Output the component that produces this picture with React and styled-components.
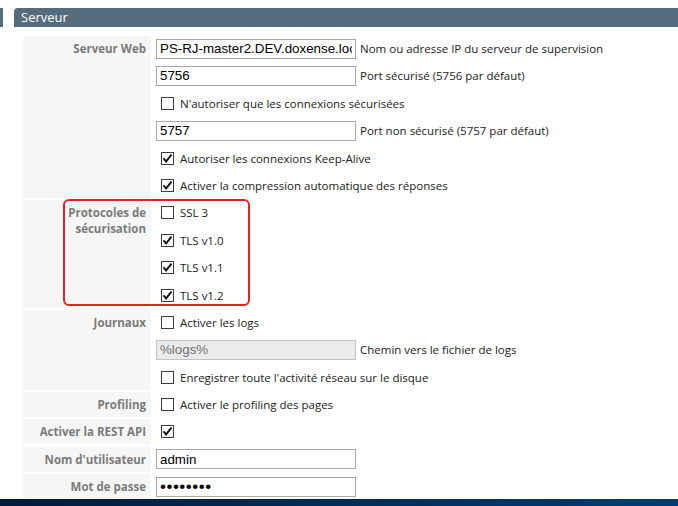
import React from 'react'
import styled, { createGlobalStyle } from 'styled-components'

const GlobalStyle = createGlobalStyle`
  html, body {
    margin: 0;
    padding: 0;
    height: 100%;
    overflow: hidden;
    background: #ffffff;
  }
  #root {
    height: 100%;
  }
`

const UI_FONT = `"Open Sans", "Noto Sans", sans-serif`

const Page = styled.div`
  display: flex;
  flex-direction: column;
  height: 100%;
  padding-top: 8px;
  box-sizing: border-box;
  font-family: ${UI_FONT};
  font-size: 11.5px;
  color: #222;
`

const HeaderRow = styled.div`
  display: flex;
  align-items: stretch;
  height: 19px;
`

const HeaderTab = styled.div`
  width: 3px;
  background: #566c7d;
`

const Header = styled.div`
  flex: 1;
  margin-left: 11px;
  padding-left: 7px;
  background: #566c7d;
  border-top-left-radius: 4px;
  color: #ffffff;
  font-size: 13px;
  line-height: 19px;
`

const Form = styled.div`
  display: flex;
  flex-direction: column;
  gap: 2.4px;
  margin: 9px 0 0 23px;
`

const Row = styled.div`
  position: relative;
  display: grid;
  grid-template-columns: 128px 1fr;
`

const Label = styled.div`
  background: #f6f6f6;
  text-align: right;
  padding: 5px 5px 0 0;
  font-weight: 700;
  line-height: 16px;
  color: #7b7b7b;
`

const Values = styled.div`
  display: flex;
  flex-direction: column;
  gap: 2.4px;
  padding-left: 5px;
`

const Line = styled.div`
  height: 25px;
  display: flex;
  align-items: center;
  gap: 4px;
  white-space: nowrap;
`

const TextInput = styled.input`
  box-sizing: border-box;
  width: 200px;
  height: 20px;
  margin: 0;
  padding: 0 3px;
  border: 1px solid ${({ disabled }) => (disabled ? '#c2c2c2' : '#a9a9a9')};
  background: ${({ disabled }) => (disabled ? '#ebebeb' : '#ffffff')};
  color: ${({ disabled }) => (disabled ? '#707070' : '#000000')};
  font-family: "Liberation Sans", Arial, sans-serif;
  font-size: ${({ type }) => (type === 'password' ? '17px' : '13.33px')};
  letter-spacing: ${({ type }) => (type === 'password' ? '0.5px' : 'normal')};
  outline: none;
`

const Hint = styled.span`
  color: #222;
`

const CheckWrap = styled.label`
  display: flex;
  align-items: center;
  gap: 6px;
  padding-left: 5px;
`

const Box = styled.svg`
  flex: none;
  display: block;
`

const Annotation = styled.div`
  position: absolute;
  left: 40px;
  top: -1px;
  width: 187px;
  height: 107px;
  box-sizing: border-box;
  border: 2px solid #e52222;
  border-radius: 6px;
  pointer-events: none;
`

const Taskbar = styled.div`
  margin-top: auto;
  height: 8px;
  background: linear-gradient(90deg, #001a38 0%, #012a55 45%, #003d72 100%);
`

function Checkbox({ checked, children }) {
  return (
    <CheckWrap>
      <Box width="13" height="13" viewBox="0 0 13 13">
        <rect x="0.5" y="0.5" width="12" height="12" fill="#fff" stroke="#3c3c3c" />
        {checked && (
          <path d="M2.5 6.4 L5.1 9.4 L10.5 2.7" fill="none" stroke="#111" strokeWidth="1.9" />
        )}
      </Box>
      {children && <span>{children}</span>}
    </CheckWrap>
  )
}

function Field({ value, hint, disabled, type }) {
  return (
    <Line>
      <TextInput type={type || 'text'} defaultValue={value} disabled={disabled} readOnly />
      {hint && <Hint>{hint}</Hint>}
    </Line>
  )
}

export default function App() {
  return (
    <>
      <GlobalStyle />
      <Page>
        <HeaderRow>
          <HeaderTab />
          <Header>Serveur</Header>
        </HeaderRow>
        <Form>
          <Row>
            <Label>Serveur Web</Label>
            <Values>
              <Field value="PS-RJ-master2.DEV.doxense.local" hint="Nom ou adresse IP du serveur de supervision" />
              <Field value="5756" hint="Port sécurisé (5756 par défaut)" />
              <Line><Checkbox>N'autoriser que les connexions sécurisées</Checkbox></Line>
              <Field value="5757" hint="Port non sécurisé (5757 par défaut)" />
              <Line><Checkbox checked>Autoriser les connexions Keep-Alive</Checkbox></Line>
              <Line><Checkbox checked>Activer la compression automatique des réponses</Checkbox></Line>
            </Values>
          </Row>
          <Row>
            <Label>Protocoles de<br />sécurisation</Label>
            <Values>
              <Line><Checkbox>SSL 3</Checkbox></Line>
              <Line><Checkbox checked>TLS v1.0</Checkbox></Line>
              <Line><Checkbox checked>TLS v1.1</Checkbox></Line>
              <Line><Checkbox checked>TLS v1.2</Checkbox></Line>
            </Values>
            <Annotation />
          </Row>
          <Row>
            <Label>Journaux</Label>
            <Values>
              <Line><Checkbox>Activer les logs</Checkbox></Line>
              <Field value="%logs%" hint="Chemin vers le fichier de logs" disabled />
              <Line><Checkbox>Enregistrer toute l'activité réseau sur le disque</Checkbox></Line>
            </Values>
          </Row>
          <Row>
            <Label>Profiling</Label>
            <Values>
              <Line><Checkbox>Activer le profiling des pages</Checkbox></Line>
            </Values>
          </Row>
          <Row>
            <Label>Activer la REST API</Label>
            <Values>
              <Line><Checkbox checked /></Line>
            </Values>
          </Row>
          <Row>
            <Label>Nom d'utilisateur</Label>
            <Values>
              <Field value="admin" />
            </Values>
          </Row>
          <Row>
            <Label>Mot de passe</Label>
            <Values>
              <Field value="password" type="password" />
            </Values>
          </Row>
        </Form>
        <Taskbar />
      </Page>
    </>
  )
}
